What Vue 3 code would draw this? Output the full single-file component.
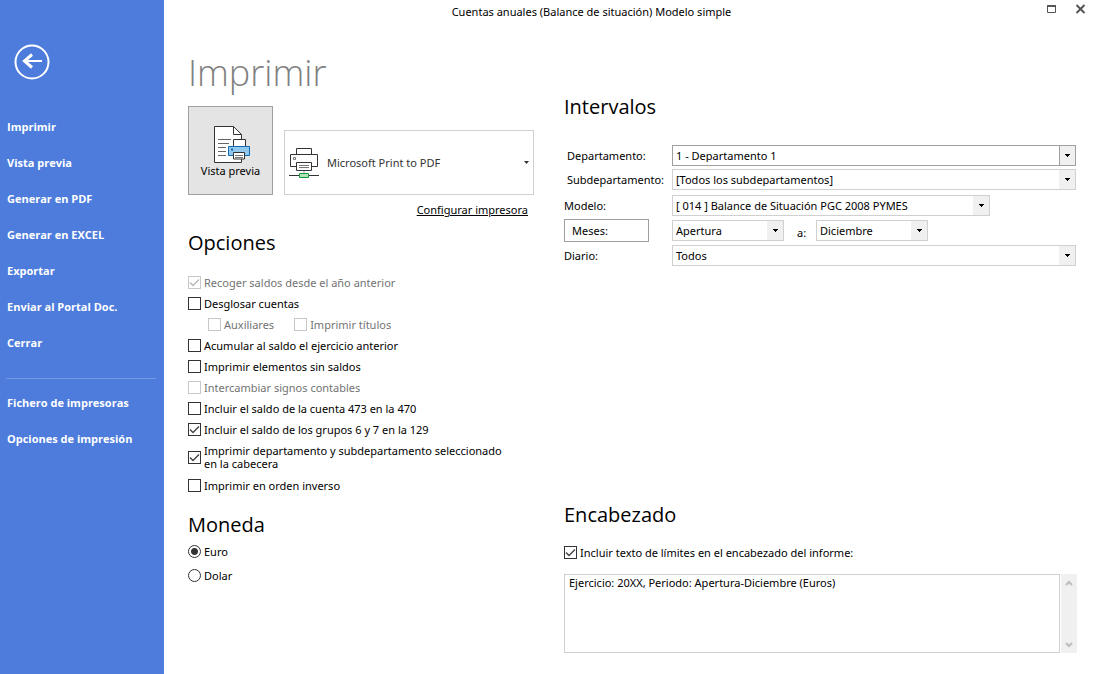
<script setup>
import { ref } from 'vue'

const menuMain = ['Imprimir', 'Vista previa', 'Generar en PDF', 'Generar en EXCEL', 'Exportar', 'Enviar al Portal Doc.', 'Cerrar']
const menuExtra = ['Fichero de impresoras', 'Opciones de impresión']

const optionRows = ref([
  [{ label: 'Recoger saldos desde el año anterior', checked: true, disabled: true }],
  [{ label: 'Desglosar cuentas', checked: false }],
  [
    { label: 'Auxiliares', checked: false, disabled: true },
    { label: 'Imprimir títulos', checked: false, disabled: true }
  ],
  [{ label: 'Acumular al saldo el ejercicio anterior', checked: false }],
  [{ label: 'Imprimir elementos sin saldos', checked: false }],
  [{ label: 'Intercambiar signos contables', checked: false, disabled: true }],
  [{ label: 'Incluir el saldo de la cuenta 473 en la 470', checked: false }],
  [{ label: 'Incluir el saldo de los grupos 6 y 7 en la 129', checked: true }],
  [{ label: 'Imprimir departamento y subdepartamento seleccionado en la cabecera', checked: true, wrap: true }],
  [{ label: 'Imprimir en orden inverso', checked: false }]
])

const currency = ref('Euro')
const includeLimits = ref(true)
const headerText = ref('Ejercicio: 20XX, Periodo: Apertura-Diciembre (Euros)')
</script>

<template>
  <div class="window">
    <aside class="sidebar">
      <button class="back" type="button" aria-label="Volver">
        <svg width="36" height="36" viewBox="0 0 36 36" fill="none" stroke="#fff">
          <circle cx="18" cy="18" r="16.5" stroke-width="2" />
          <path d="M10 17h18" stroke-width="2" />
          <path d="M18 10.500l-7.500 6.500 7.500 6.500" stroke-width="3" />
        </svg>
      </button>
      <nav class="menu">
        <a v-for="item in menuMain" :key="item" href="#">{{ item }}</a>
        <hr />
        <a v-for="item in menuExtra" :key="item" href="#">{{ item }}</a>
      </nav>
    </aside>

    <div class="content">
      <header class="titlebar">
        <span class="caption">Cuentas anuales (Balance de situación) Modelo simple</span>
        <div class="controls">
          <button type="button" aria-label="Maximizar">
            <svg width="11" height="10" viewBox="0 0 11 10"><path d="M1.500 1.500h8v7h-8z" fill="none" stroke="#555" /><path d="M1 1h9v2H1z" fill="#555" /></svg>
          </button>
          <button type="button" aria-label="Cerrar">
            <svg width="11" height="11" viewBox="0 0 11 11"><path d="M1.500 1l8 8M9.500 1l-8 8" stroke="#555" stroke-width="2" /></svg>
          </button>
        </div>
      </header>

      <main class="columns">
        <div class="left">
          <h1>Imprimir</h1>
          <div class="print-row">
            <button class="preview" type="button">
              <svg width="37" height="39" viewBox="0 0 37 39" fill="none">
                <path d="M1.500 1.500h19l8 8v28h-27z" fill="#fff" stroke="#333" />
                <path d="M20.500 1.500v8h8" stroke="#333" />
                <path d="M5 14.500h13M5 18.500h11M5 22.500h8M5 26.500h8M5 30.500h8" stroke="#666" />
                <path d="M20.500 14.500h12v7h-12z" fill="#fff" stroke="#333" />
                <path d="M15.500 21.500h21v9h-21z" fill="#92c8ee" stroke="#0f69b4" />
                <path d="M18 23.500h2v2h-2z" fill="#0f69b4" />
                <path d="M20.500 27.500h11v6.500h-11z" fill="#fff" stroke="#333" />
                <path d="M22 30.500h8M22 32.500h8" stroke="#777" />
              </svg>
              <span>Vista previa</span>
            </button>
            <button class="printer" type="button">
              <svg width="30" height="31" viewBox="0 0 30 31" fill="none">
                <path d="M7.500 7.500v-6h15v6" stroke="#333" />
                <path d="M7.500 19.500h-6v-12h27v12h-6" stroke="#333" />
                <path d="M4.500 10.500h2v2h-2z" stroke="#777" />
                <path d="M7.500 15.500h15v8h-15z" fill="#fff" stroke="#333" />
                <path d="M10 18.500h10M10 20.500h10" stroke="#777" />
                <path d="M15 24v2" stroke="#999" />
                <path d="M0 28.500h30" stroke="#333" />
                <path d="M10.500 26.500h9v4h-9z" fill="#b5e0bd" stroke="#129b3c" />
              </svg>
              <span>Microsoft Print to PDF</span>
              <svg class="caret" width="5" height="3" viewBox="0 0 5 3"><path d="M0 0h5L2.500 3z" fill="#333" /></svg>
            </button>
          </div>
          <a class="configure" href="#">Configurar impresora</a>

          <section>
            <h2>Opciones</h2>
            <div class="options">
              <div v-for="(row, i) in optionRows" :key="i" class="option-row" :class="{ nested: row.length > 1, tall: row[0].wrap }">
                <label v-for="option in row" :key="option.label" class="check" :class="{ off: option.disabled }">
                  <input v-model="option.checked" type="checkbox" :disabled="option.disabled" />
                  <span>{{ option.label }}</span>
                </label>
              </div>
            </div>
          </section>

          <section class="currency">
            <h2>Moneda</h2>
            <label v-for="name in ['Euro', 'Dolar']" :key="name" class="check radio">
              <input v-model="currency" type="radio" name="currency" :value="name" />
              <span>{{ name }}</span>
            </label>
          </section>
        </div>

        <div class="right">
          <section>
            <h2>Intervalos</h2>
            <div class="ranges">
              <div class="field">
                <label class="indent" for="dep">Departamento:</label>
                <div class="combo active"><select id="dep"><option>1 - Departamento 1</option></select><i><svg width="5" height="3" viewBox="0 0 5 3"><path d="M0 0h5v1H4v1H3v1H2V2H1V1H0z" /></svg></i></div>
              </div>
              <div class="field">
                <label class="indent" for="sub">Subdepartamento:</label>
                <div class="combo"><select id="sub"><option>[Todos los subdepartamentos]</option></select><i><svg width="5" height="3" viewBox="0 0 5 3"><path d="M0 0h5v1H4v1H3v1H2V2H1V1H0z" /></svg></i></div>
              </div>
              <div class="field apart">
                <label for="model">Modelo:</label>
                <div class="combo model"><select id="model"><option>[ 014 ] Balance de Situación PGC 2008 PYMES</option></select><i><svg width="5" height="3" viewBox="0 0 5 3"><path d="M0 0h5v1H4v1H3v1H2V2H1V1H0z" /></svg></i></div>
              </div>
              <div class="field">
                <div class="month-cell"><button class="months" type="button">Meses:</button></div>
                <div class="combo month"><select aria-label="Mes inicial"><option>Apertura</option></select><i><svg width="5" height="3" viewBox="0 0 5 3"><path d="M0 0h5v1H4v1H3v1H2V2H1V1H0z" /></svg></i></div>
                <label class="until" for="until">a:</label>
                <div class="combo month"><select id="until"><option>Diciembre</option></select><i><svg width="5" height="3" viewBox="0 0 5 3"><path d="M0 0h5v1H4v1H3v1H2V2H1V1H0z" /></svg></i></div>
              </div>
              <div class="field">
                <label for="journal">Diario:</label>
                <div class="combo"><select id="journal"><option>Todos</option></select><i><svg width="5" height="3" viewBox="0 0 5 3"><path d="M0 0h5v1H4v1H3v1H2V2H1V1H0z" /></svg></i></div>
              </div>
            </div>
          </section>

          <section class="heading">
            <h2>Encabezado</h2>
            <label class="check limits">
              <input v-model="includeLimits" type="checkbox" />
              <span>Incluir texto de límites en el encabezado del informe:</span>
            </label>
            <div class="memo">
              <textarea v-model="headerText" aria-label="Texto del encabezado"></textarea>
              <div class="scroll">
                <svg width="8" height="6" viewBox="0 0 8 6"><path d="M1 5l3-3 3 3" /></svg>
                <svg width="8" height="6" viewBox="0 0 8 6"><path d="M1 1l3 3 3-3" /></svg>
              </div>
            </div>
          </section>
        </div>
      </main>
    </div>
  </div>
</template>

<style>
body {
  margin: 0;
  background: #fff;
}
</style>

<style scoped>
.window {
  display: flex;
  min-height: 100vh;
  font: 11px/13px "Noto Sans", "Open Sans", sans-serif;
  color: #000;
}
.window * {
  box-sizing: border-box;
}
button,
select,
textarea {
  font: inherit;
  color: inherit;
  border-radius: 0;
}
button {
  padding: 0;
  cursor: pointer;
}

.sidebar {
  flex: none;
  width: 164px;
  padding: 44px 8px 0 6px;
  background: #4d7cdc;
}
.back {
  display: block;
  margin-left: 8px;
  border: 0;
  background: none;
}
.back svg {
  display: block;
}
.menu {
  display: flex;
  flex-direction: column;
  margin-top: 29px;
}
.menu a {
  padding-left: 1px;
  color: #fff;
  font: 700 11px/36px "Open Sans", "Noto Sans", sans-serif;
  text-decoration: none;
}
.menu hr {
  width: 100%;
  height: 1px;
  margin: 17px 0 6px;
  border: 0;
  background: #7599e4;
}

.content {
  flex: 1;
  min-width: 0;
}
.titlebar {
  display: flex;
  align-items: center;
  height: 24px;
  padding: 0 10px 0 24px;
}
.caption {
  flex: 1;
  padding: 0 51px 2px 0;
  text-align: center;
}
.controls {
  display: flex;
  gap: 18px;
  padding-bottom: 6px;
}
.controls button {
  border: 0;
  background: none;
}
.controls svg {
  display: block;
}

.columns {
  display: grid;
  grid-template-columns: minmax(346px, 2fr) minmax(420px, 3fr);
  column-gap: 30px;
  padding: 0 19px 20px 24px;
}
.left {
  display: flex;
  flex-direction: column;
}
h1,
h2 {
  margin: 0;
  font-family: "Open Sans", "Noto Sans", sans-serif;
  font-weight: 400;
}
h1 {
  margin-top: 25px;
  font-size: 36px;
  font-weight: 350;
  line-height: 48px;
  color: #808080;
}
h2 {
  font-size: 20px;
  line-height: 28px;
}
.print-row {
  display: flex;
  align-items: flex-end;
  gap: 11px;
  margin-top: 9px;
}
.preview {
  display: flex;
  flex-direction: column;
  align-items: center;
  flex: none;
  width: 85px;
  height: 89px;
  padding-top: 18px;
  border: 1px solid #a0a0a0;
  background: #e4e4e4;
}
.preview svg {
  margin-left: 2px;
}
.printer {
  display: flex;
  align-items: center;
  flex: 1;
  height: 65px;
  padding: 0 4px;
  border: 1px solid #d0d0d0;
  background: #fff;
  color: #333;
  text-align: left;
}
.printer span {
  flex: 1;
  padding-left: 8px;
}
.configure {
  align-self: flex-end;
  margin: 7px 6px 0 0;
  color: #000;
  line-height: 16px;
}
.left section {
  margin-top: 11px;
}
.options {
  margin-top: 15px;
}
.option-row {
  display: flex;
  gap: 20px;
  min-height: 21px;
}
.nested {
  padding-left: 20px;
}
.tall {
  max-width: 320px;
  padding: 4px 0 5px;
}
.check {
  display: flex;
  align-items: center;
  gap: 3px;
}
.off {
  color: #737373;
}
.check input {
  flex: none;
  appearance: none;
  width: 13px;
  height: 13px;
  margin: 0;
  border: 1px solid #333;
  background: #fff center / 11px 11px no-repeat;
}
.check input[type="checkbox"]:checked {
  background-image: url("data:image/svg+xml,%3Csvg xmlns='http://www.w3.org/2000/svg' viewBox='0 0 11 11'%3E%3Cpath d='M1 5.500l3 3 6-6' fill='none' stroke='%23444' stroke-width='1.400'/%3E%3C/svg%3E");
}
.check input:disabled {
  border-color: #c8c8c8;
}
.check input[type="checkbox"]:checked:disabled {
  background-image: url("data:image/svg+xml,%3Csvg xmlns='http://www.w3.org/2000/svg' viewBox='0 0 11 11'%3E%3Cpath d='M1 5.500l3 3 6-6' fill='none' stroke='%23b8b8b8' stroke-width='1.400'/%3E%3C/svg%3E");
}
.check input[type="radio"] {
  border-radius: 50%;
}
.check input[type="radio"]:checked {
  background: radial-gradient(circle, #333 3px, #fff 4px);
}
.radio {
  height: 24px;
}
.left .currency {
  margin-top: 15px;
}

.right {
  display: flex;
  flex-direction: column;
  padding-top: 69px;
}
.ranges {
  display: flex;
  flex-direction: column;
  gap: 3px;
  margin: 24px 1px 0 0;
}
.field {
  display: flex;
  align-items: center;
  min-height: 21px;
}
.apart {
  margin-top: 2px;
}
.field > label:first-child,
.month-cell {
  flex: none;
  width: 108px;
}
.field > .indent {
  padding-left: 3px;
}
.months {
  display: block;
  width: 85px;
  height: 23px;
  padding-left: 7px;
  border: 1px solid #a0a0a0;
  background: #fff;
  text-align: left;
}
.field > .until {
  width: 32px;
  padding: 4px 0 0 13px;
}
.combo {
  display: flex;
  flex: 1;
  position: relative;
  height: 21px;
  border: 1px solid #d0d0d0;
  background: #fff;
}
.combo.model {
  flex: 0 1 318px;
}
.combo.month {
  flex: 0 1 112px;
}
.combo select {
  appearance: none;
  width: 100%;
  padding: 0 18px 0 3px;
  border: 0;
  background: none;
}
.combo i {
  position: absolute;
  inset: 0 0 0 auto;
  display: flex;
  align-items: center;
  justify-content: center;
  width: 16px;
  background: #f0f0f0;
  pointer-events: none;
}
.combo.active {
  border-color: #a0a0a0;
}
.active i {
  border-left: 1px solid #a0a0a0;
}
.heading {
  margin-top: 235px;
}
.limits {
  height: 20px;
  margin-top: 13px;
}
.memo {
  display: flex;
  gap: 1px;
  margin-top: 12px;
}
.memo textarea {
  flex: 1;
  min-width: 0;
  height: 79px;
  padding: 1px 4px;
  border: 1px solid #d0d0d0;
  resize: none;
  overflow: hidden;
}
.scroll {
  display: flex;
  flex-direction: column;
  justify-content: space-between;
  align-items: center;
  width: 16px;
  padding: 6px 0 5px;
  background: #f0f0f0;
}
.scroll path {
  fill: none;
  stroke: #bdbdbd;
  stroke-width: 2;
}
</style>
